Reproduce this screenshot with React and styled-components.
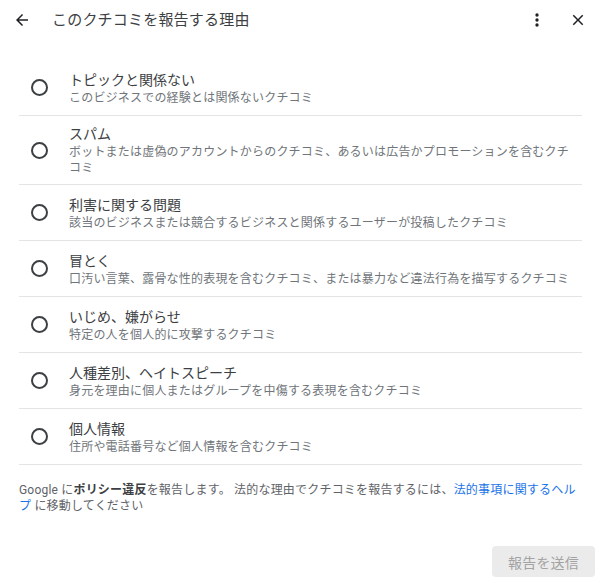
import React from "react";
import styled, { createGlobalStyle } from "styled-components";

const Global = createGlobalStyle`
  html, body { margin: 0; padding: 0; background: #fff; }
  body { font-family: Roboto, "Noto Sans CJK JP", "Noto Sans", sans-serif; color: #3c4043; }
  * { box-sizing: border-box; }
`;

const Page = styled.div`
  width: 600px;
  height: 583px;
  display: flex;
  flex-direction: column;
  background: #fff;
`;

const Header = styled.div`
  height: 40px;
  display: flex;
  align-items: center;
  padding: 0 10px;
`;

const IconButton = styled.button`
  width: 24px;
  height: 24px;
  padding: 0;
  border: 0;
  background: none;
  display: flex;
  align-items: center;
  justify-content: center;
  color: #202124;
  cursor: pointer;
  margin-left: ${(p) => p.$ml || 0}px;
`;

const Title = styled.div`
  flex: 1;
  margin-left: 18px;
  font-size: 15px;
  letter-spacing: 0.2px;
  line-height: 22px;
  color: #3c4043;
`;

const List = styled.div`
  margin: 20px 18px 0 19px;
  display: flex;
  flex-direction: column;
`;

const Row = styled.label`
  display: flex;
  align-items: center;
  min-height: 56px;
  padding: 8px 0;
  border-bottom: 1px solid #e3e4e6;
  cursor: pointer;
`;

const RadioWrap = styled.div`
  width: 40px;
  display: flex;
  justify-content: center;
  flex-shrink: 0;
`;

const Radio = styled.span`
  width: 17px;
  height: 17px;
  border-radius: 50%;
  border: 2px solid #3c4043;
`;

const Texts = styled.div`
  margin-left: 10px;
  padding-right: 8px;
  flex: 1;
  display: flex;
  flex-direction: column;
`;

const ItemTitle = styled.div`
  font-size: 14px;
  line-height: 20px;
  color: #3c4043;
`;

const ItemDesc = styled.div`
  font-size: 12px;
  letter-spacing: 0.2px;
  line-height: 16px;
  color: #70757a;
`;

const Footer = styled.div`
  padding: 17px 18px 0 19px;
  font-size: 12px;
  letter-spacing: 0.2px;
  line-height: 16px;
  color: #5f6368;
`;

const Strong = styled.b`
  font-weight: 700;
  color: #3c4043;
`;

const Link = styled.a`
  color: #1a73e8;
  text-decoration: none;
`;

const Actions = styled.div`
  display: flex;
  justify-content: flex-end;
  padding: 32px 5px 0 0;
`;

const SubmitButton = styled.button`
  height: 31px;
  padding: 0 16px;
  border: 0;
  border-radius: 4px;
  background: #ebebeb;
  color: #a3a3a3;
  font-family: Roboto, "Noto Sans CJK JP", sans-serif;
  font-size: 14px;
  letter-spacing: 0.2px;
  cursor: default;
`;

const items = [
  ["トピックと関係ない", "このビジネスでの経験とは関係ないクチコミ"],
  ["スパム", "ボットまたは虚偽のアカウントからのクチコミ、あるいは広告かプロモーションを含むクチコミ"],
  ["利害に関する問題", "該当のビジネスまたは競合するビジネスと関係するユーザーが投稿したクチコミ"],
  ["冒とく", "口汚い言葉、露骨な性的表現を含むクチコミ、または暴力など違法行為を描写するクチコミ"],
  ["いじめ、嫌がらせ", "特定の人を個人的に攻撃するクチコミ"],
  ["人種差別、ヘイトスピーチ", "身元を理由に個人またはグループを中傷する表現を含むクチコミ"],
  ["個人情報", "住所や電話番号など個人情報を含むクチコミ"],
];

export default function App() {
  return (
    <Page>
      <Global />
      <Header>
        <IconButton aria-label="戻る">
          <svg width="18" height="18" viewBox="0 0 24 24" fill="currentColor">
            <path d="M20 11H7.83l5.59-5.59L12 4l-8 8 8 8 1.41-1.41L7.83 13H20v-2z" />
          </svg>
        </IconButton>
        <Title>このクチコミを報告する理由</Title>
        <IconButton aria-label="メニュー">
          <svg width="20" height="20" viewBox="0 0 24 24" fill="currentColor">
            <circle cx="12" cy="6" r="2" />
            <circle cx="12" cy="12" r="2" />
            <circle cx="12" cy="18" r="2" />
          </svg>
        </IconButton>
        <IconButton aria-label="閉じる" $ml={17}>
          <svg width="18" height="18" viewBox="0 0 24 24" fill="currentColor">
            <path d="M19 6.41 17.59 5 12 10.59 6.41 5 5 6.41 10.59 12 5 17.59 6.41 19 12 13.41 17.59 19 19 17.59 13.41 12z" />
          </svg>
        </IconButton>
      </Header>
      <List>
        {items.map(([t, d]) => (
          <Row key={t}>
            <RadioWrap>
              <Radio />
            </RadioWrap>
            <Texts>
              <ItemTitle>{t}</ItemTitle>
              <ItemDesc>{d}</ItemDesc>
            </Texts>
          </Row>
        ))}
      </List>
      <Footer>
        Google に<Strong>ポリシー違反</Strong>を報告します。 法的な理由でクチコミを報告するには、
        <Link href="#">法的事項に関するヘルプ</Link> に移動してください
      </Footer>
      <Actions>
        <SubmitButton disabled>報告を送信</SubmitButton>
      </Actions>
    </Page>
  );
}
